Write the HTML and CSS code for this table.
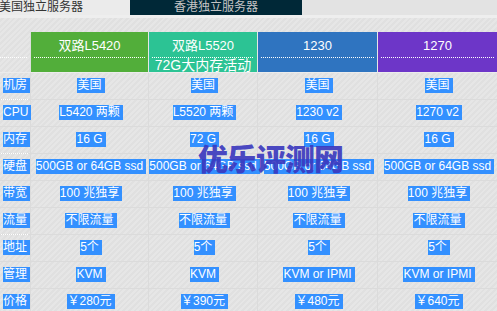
FILE: index.html
```html
<!DOCTYPE html>
<html lang="zh">
<head>
<meta charset="utf-8">
<title>独立服务器</title>
<link rel="stylesheet" href="styles.css">
</head>
<body>
<div class="page">
  <div class="tabs">
    <div class="tab tab-active">美国独立服务器</div>
    <div class="tab tab-dark">香港独立服务器</div>
  </div>
  <div class="strip"></div>
  <div class="spacer"></div>
  <div class="table">
    <div class="hcell hlabel"><div class="htop"></div><div class="hdots"></div></div>
    <div class="hcell green"><div class="htop">双路L5420</div><div class="hdots"></div></div>
    <div class="hcell teal"><div class="htop">双路L5520</div><div class="hdots"></div><div class="hsub">72G大内存活动</div></div>
    <div class="hcell blue"><div class="htop">1230</div><div class="hdots"></div></div>
    <div class="hcell purple"><div class="htop">1270</div><div class="hdots"></div></div>

    <div class="lbl dot"><span class="sel">机房</span></div>
    <div class="cell"><span class="sel">美国</span></div>
    <div class="cell"><span class="sel">美国</span></div>
    <div class="cell"><span class="sel">美国</span></div>
    <div class="cell"><span class="sel">美国</span></div>

    <div class="lbl"><span class="sel">CPU</span></div>
    <div class="cell"><span class="sel">L5420 两颗</span></div>
    <div class="cell"><span class="sel">L5520 两颗</span></div>
    <div class="cell"><span class="sel">1230 v2</span></div>
    <div class="cell"><span class="sel">1270 v2</span></div>

    <div class="lbl dot"><span class="sel">内存</span></div>
    <div class="cell"><span class="sel">16 G</span></div>
    <div class="cell"><span class="sel">72 G</span></div>
    <div class="cell"><span class="sel">16 G</span></div>
    <div class="cell"><span class="sel">16 G</span></div>

    <div class="lbl"><span class="sel">硬盘</span></div>
    <div class="cell"><span class="sel">500GB or 64GB ssd</span></div>
    <div class="cell"><span class="sel">500GB or 64GB ssd</span></div>
    <div class="cell"><span class="sel">500GB or 64GB ssd</span></div>
    <div class="cell"><span class="sel">500GB or 64GB ssd</span></div>

    <div class="lbl"><span class="sel">带宽</span></div>
    <div class="cell"><span class="sel">100 兆独享</span></div>
    <div class="cell"><span class="sel">100 兆独享</span></div>
    <div class="cell"><span class="sel">100 兆独享</span></div>
    <div class="cell"><span class="sel">100 兆独享</span></div>

    <div class="lbl dot"><span class="sel">流量</span></div>
    <div class="cell"><span class="sel">不限流量</span></div>
    <div class="cell"><span class="sel">不限流量</span></div>
    <div class="cell"><span class="sel">不限流量</span></div>
    <div class="cell"><span class="sel">不限流量</span></div>

    <div class="lbl"><span class="sel">地址</span></div>
    <div class="cell"><span class="sel">5个</span></div>
    <div class="cell"><span class="sel">5个</span></div>
    <div class="cell"><span class="sel">5个</span></div>
    <div class="cell"><span class="sel">5个</span></div>

    <div class="lbl"><span class="sel">管理</span></div>
    <div class="cell"><span class="sel">KVM</span></div>
    <div class="cell"><span class="sel">KVM</span></div>
    <div class="cell"><span class="sel">KVM or IPMI</span></div>
    <div class="cell"><span class="sel">KVM or IPMI</span></div>

    <div class="lbl"><span class="sel">价格</span></div>
    <div class="cell"><span class="sel">￥280元</span></div>
    <div class="cell"><span class="sel">￥390元</span></div>
    <div class="cell"><span class="sel">￥480元</span></div>
    <div class="cell"><span class="sel">￥640元</span></div>
  </div>
  <div class="watermark">优乐评测网</div>
</div>
</body>
</html>
```

FILE: styles.css
```css
* { box-sizing: border-box; }
html, body {
  margin: 0;
  padding: 0;
  width: 497px;
  height: 311px;
  overflow: hidden;
}
body {
  font-family: "Liberation Sans", "Noto Sans CJK SC", sans-serif;
  font-size: 12px;
  background: repeating-linear-gradient(135deg, #e6e6e6 0 2px, #e0e0e0 2px 4px);
}
.page {
  position: relative;
  width: 497px;
  height: 311px;
}
.tabs {
  display: flex;
  height: 15px;
  background: #e3e3e3;
}
.tab {
  height: 15px;
  line-height: 15px;
  font-size: 12px;
  white-space: nowrap;
}
.tab-active {
  width: 130px;
  background: #ebebeb;
  color: #333;
  text-indent: -1px;
}
.tab-dark {
  width: 172px;
  background: #002837;
  color: #c4c4c4;
  text-align: center;
}
.strip {
  height: 3px;
  background: #eeeeee;
}
.spacer {
  height: 14px;
}
.table {
  display: grid;
  grid-template-columns: 31px 118px 109px 120px 119px;
  grid-template-rows: 41px repeat(9, 27px);
}
.hcell {
  height: 41px;
  border-bottom: 1px solid #ececec;
  border-right: 1px solid #e6e6e6;
  color: #fff;
  text-align: center;
  white-space: nowrap;
}
.hlabel { background: transparent; border-right: 1px solid #dedede; }
.green { background: #52ae3a; }
.teal { background: #2cc394; }
.blue { background: #2f74c0; }
.purple { background: #6d36c8; border-right: 0; }
.htop {
  height: 25px;
  line-height: 25px;
  font-size: 13px;
  padding-top: 1px;
}
.hdots {
  height: 1px;
  margin: 0 3px;
  background: repeating-linear-gradient(90deg, #fff 0 1px, transparent 1px 2px);
}
.hlabel .hdots { margin: 0 2px 0 0; }
.hsub {
  height: 14px;
  line-height: 14px;
  font-size: 14px;
  position: relative;
  z-index: 1;
  overflow: visible;
}
.lbl, .cell {
  height: 27px;
  border-bottom: 1px solid #dbdbdb;
  border-right: 1px solid #dbdbdb;
  display: flex;
  align-items: center;
  color: #fff;
  white-space: nowrap;
  padding-bottom: 1px;
}
.lbl {
  padding-left: 3px;
  position: relative;
}
.lbl.dot::after {
  content: "";
  position: absolute;
  left: 1px;
  right: 1px;
  bottom: -1px;
  height: 1px;
  background: repeating-linear-gradient(90deg, #fff 0 1px, transparent 1px 2px);
}
.cell {
  justify-content: center;
  padding-left: 3px;
}
.cell:nth-child(5n) { border-right: 0; }
.sel {
  display: inline-block;
  height: 15px;
  line-height: 15px;
  background: #3390ff;
  color: #fff;
  padding-right: 3px;
}
.watermark {
  position: absolute;
  left: 198px;
  top: 139px;
  font-family: "Noto Sans CJK SC", sans-serif;
  font-size: 30px;
  line-height: 36px;
  font-weight: 900;
  color: rgba(58, 56, 190, 0.92);
  letter-spacing: -1px;
  white-space: nowrap;
}
```
